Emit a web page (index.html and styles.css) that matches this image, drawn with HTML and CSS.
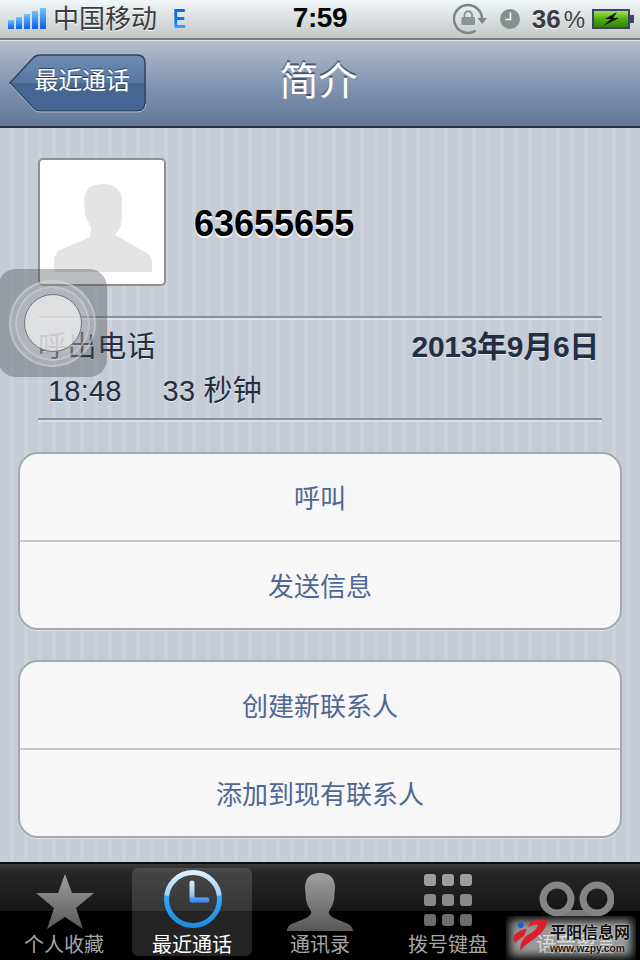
FILE: index.html
```html
<!DOCTYPE html>
<html lang="zh-CN">
<head>
<meta charset="utf-8">
<title>简介</title>
<link rel="stylesheet" href="styles.css">
</head>
<body>
<div class="phone">
  <header class="status">
    <div class="status-left">
      <svg class="signal" width="44" height="22" viewBox="0 0 44 22"><defs><linearGradient id="sg" x1="0" y1="0" x2="0" y2="1"><stop offset="0" stop-color="#6cc4ff"/><stop offset="1" stop-color="#0a5fe6"/></linearGradient></defs><rect x="0" y="12" width="6" height="9" fill="url(#sg)"/><rect x="8" y="9" width="6" height="12" fill="url(#sg)"/><rect x="16" y="6" width="6" height="15" fill="url(#sg)"/><rect x="24" y="3" width="6" height="18" fill="url(#sg)"/><rect x="32" y="0" width="6" height="21" fill="url(#sg)"/></svg>
      <span class="carrier">中国移动</span>
      <span class="edge">E</span>
    </div>
    <div class="clock">7:59</div>
    <div class="status-right">
      <svg class="rot" width="36" height="32" viewBox="0 0 36 32"><path d="M22.500 27.800A14 14 0 1 1 29 16" fill="none" stroke="#7a8584" stroke-width="2.500"/><path d="M24.500 15H34L29.200 21z" fill="#7a8584"/><rect x="8.500" y="14" width="13.500" height="8" rx="1" fill="#8a9493"/><path d="M11.500 14v-2a3.700 3.700 0 0 1 7.500 0v2" fill="none" stroke="#8a9493" stroke-width="2"/></svg>
      <svg class="alarm" width="20" height="20" viewBox="0 0 20 20"><circle cx="10" cy="10" r="10" fill="#858f8e"/><path d="M10.500 3.500v7h-5" fill="none" stroke="#fff" stroke-width="1.600"/></svg>
      <span class="pct">36<span class="pct-sign">%</span></span>
      <svg class="batt" width="42" height="20" viewBox="0 0 42 20"><defs><linearGradient id="bg" x1="0" y1="0" x2="0" y2="1"><stop offset="0" stop-color="#a8e85a"/><stop offset=".5" stop-color="#4fae14"/><stop offset="1" stop-color="#2e7f08"/></linearGradient></defs><rect x="1" y="1" width="36" height="18" fill="url(#bg)" stroke="#3c4664" stroke-width="2"/><rect x="38" y="6" width="4" height="8" fill="#3c4664"/><path d="M25 3 13 10H19L11 17 27 9H21Z" fill="#0a0d05"/></svg>
    </div>
  </header>

  <nav class="navbar">
    <a class="back"><svg class="back-shape" width="138" height="60" viewBox="0 0 138 60"><defs><linearGradient id="bk" x1="0" y1="0" x2="0" y2="1"><stop offset="0" stop-color="#6e8cb4"/><stop offset=".5" stop-color="#5676a2"/><stop offset=".51" stop-color="#45668f"/><stop offset="1" stop-color="#456797"/></linearGradient></defs><path d="M1 30 24 5Q27 2 31 2H128Q136 2 136 10V50Q136 58 128 58H31Q27 58 24 55Z" fill="url(#bk)" stroke="#2f435f" stroke-width="1.500"/><path d="M1 31 24 56Q27 59 31 59H128Q136 59 137 51" fill="none" stroke="#aebdd1" stroke-width="1"/></svg><span class="back-label">最近通话</span></a>
    <h1 class="title">简介</h1>
  </nav>

  <main class="content">
    <section class="person">
      <div class="avatar">
        <svg width="98" height="88" viewBox="0 0 98 88"><path d="M49 0C60 0 68 6 68 16L68 30C68 40 66 46 62 49L61 51 93 69Q97 72 98 77V88H0V74L4 67 36 53 37 44 31 31 30 13 34 4C40 1 45 0 49 0Z" fill="#e4e4e4"/></svg>
      </div>
      <div class="number">63655655</div>
    </section>

    <section class="call">
      <div class="call-top"><span class="call-type">呼出电话</span><span class="call-date">2013年9月6日</span></div>
      <div class="call-meta"><span>18:48</span><span>33 秒钟</span></div>
    </section>

    <section class="group">
      <a class="row">呼叫</a>
      <a class="row">发送信息</a>
    </section>
    <section class="group">
      <a class="row">创建新联系人</a>
      <a class="row">添加到现有联系人</a>
    </section>
  </main>

  <footer class="tabbar">
    <a class="tab">
      <svg class="tab-icon" width="60" height="62" viewBox="0 0 60 62"><defs><linearGradient id="tg" x1="0" y1="0" x2="0" y2="1"><stop offset="0" stop-color="#a0a0a0"/><stop offset="1" stop-color="#585858"/></linearGradient></defs><path d="M31 4 38 23H60L42 38 49 59 31 47 13 59 20 38 2 23H24Z" fill="url(#tg)"/></svg>
      <span>个人收藏</span>
    </a>
    <a class="tab tab-active">
      <svg class="tab-icon" width="60" height="62" viewBox="0 0 60 62"><defs><linearGradient id="ck" x1="0" y1="0" x2="0" y2="1"><stop offset="0" stop-color="#dcefff"/><stop offset=".43" stop-color="#9fd0f5"/><stop offset=".44" stop-color="#35aaf2"/><stop offset="1" stop-color="#1a8fe0"/></linearGradient><linearGradient id="hd" x1="0" y1="0" x2="0" y2="1"><stop offset="0" stop-color="#cfe8fd"/><stop offset=".75" stop-color="#8cc4f6"/><stop offset="1" stop-color="#3f8ff0"/></linearGradient></defs><circle cx="31" cy="29" r="26.500" fill="none" stroke="url(#ck)" stroke-width="5"/><path d="M30 13V30H45" fill="none" stroke="url(#hd)" stroke-width="5" stroke-linecap="round" stroke-linejoin="round"/></svg>
      <span>最近通话</span>
    </a>
    <a class="tab">
      <svg class="tab-icon" width="68" height="62" viewBox="0 0 68 62"><path d="M34 3C44 3 49 8 49 18L48 30C47 35 45 38 43 41 42 45 46 47 50 49L60 53C65 55 67 58 67 61H1C1 57 4 54 8 53L18 49C22 47 26 45 25 41 23 38 21 35 20 30L19 18C19 8 24 3 34 3Z" fill="url(#tg)"/></svg>
      <span>通讯录</span>
    </a>
    <a class="tab">
      <svg class="tab-icon" width="60" height="62" viewBox="0 0 60 62"><g class="key-top"><rect x="6" y="4" width="12" height="12" rx="3"/><rect x="24" y="4" width="12" height="12" rx="3"/><rect x="42" y="4" width="12" height="12" rx="3"/></g><g class="key-mid"><rect x="6" y="24" width="12" height="12" rx="3"/><rect x="24" y="24" width="12" height="12" rx="3"/><rect x="42" y="24" width="12" height="12" rx="3"/></g><g class="key-low"><rect x="6" y="44" width="12" height="12" rx="3"/><rect x="24" y="44" width="12" height="12" rx="3"/><rect x="42" y="44" width="12" height="12" rx="3"/></g></svg>
      <span>拨号键盘</span>
    </a>
    <a class="tab">
      <svg class="tab-icon" width="76" height="62" viewBox="0 0 76 62"><path d="M19 43H59" stroke="#7a7a7a" stroke-width="6"/><circle cx="19" cy="29" r="14" fill="none" stroke="#858585" stroke-width="7"/><circle cx="59" cy="29" r="14" fill="none" stroke="#858585" stroke-width="7"/></svg>
      <span>语音留言</span>
    </a>
  </footer>

  <div class="assistive">
    <div class="assistive-ring"><div class="assistive-core"></div></div>
  </div>

  <div class="watermark">
    <svg width="40" height="36" viewBox="0 0 40 36"><path d="M20 4C26 1 32 1 37 2 37 10 31 16 24 21 18 25 13 29 10 33 10 26 12 22 16 18 22 15 27 11 28 7 25 6 22 7 18 9Z" fill="#d8202a"/><path d="M3 20C5 15 11 11 17 11L14 18C11 20 8 22 5 25Z" fill="#d8202a"/><circle cx="10.700" cy="7" r="3" fill="#1a62c4"/></svg>
    <div class="wm-text"><span class="wm-cn">平阳信息网</span><span class="wm-en">www.wzpy.com</span></div>
  </div>
</div>
</body>
</html>
```
FILE: styles.css
```css
* { box-sizing: border-box; }
html, body { margin: 0; padding: 0; }
body { width: 640px; height: 960px; overflow: hidden; font-family: "Liberation Sans", "Noto Sans CJK SC", sans-serif; }
.phone { position: relative; width: 640px; height: 960px; display: flex; flex-direction: column; overflow: hidden; background: #c5ccd6; }

.status { height: 40px; flex: none; display: flex; align-items: center; justify-content: space-between; background: linear-gradient(#f1f6f8, #c3c7c7); border-bottom: 2px solid #7e8080; position: relative; padding: 0 8px; }
.status-left { display: flex; align-items: center; width: 230px; }
.signal { margin-top: -1px; flex: none; }
.carrier { font-size: 26px; line-height: 30px; color: #3a3d3e; margin-left: 1px; text-shadow: 0 1px 0 #fff; margin-top: -1px; }
.edge { display: inline-block; font-size: 27px; line-height: 24px; font-weight: 700; margin-left: 16px; width: 18px; transform: scaleX(.72); transform-origin: 0 50%; background: linear-gradient(#0a66e0, #0c7af0 60%, #55c0ff); -webkit-background-clip: text; background-clip: text; color: transparent; }
.clock { position: absolute; left: 0; right: 0; text-align: center; font-size: 28px; font-weight: 700; letter-spacing: -0.4px; color: #060606; margin-top: -2px; }
.status-right { display: flex; align-items: center; margin-right: -2px; }
.rot { margin-right: 11px; flex: none; }
.alarm { margin-right: 12px; flex: none; }
.pct { font-size: 26px; font-weight: 700; color: #3a3c3e; margin-right: 7px; text-shadow: 0 1px 0 #fff; white-space: nowrap; }
.pct-sign { font-weight: 400; font-size: 24px; margin-left: 3px; }
.batt { flex: none; }

.navbar { height: 88px; flex: none; position: relative; background: linear-gradient(#b5c0ce 0%, #98a7bd 28%, #7b8fac 60%, #64799a 100%); border-top: 1px solid #e3e7ec; border-bottom: 2px solid #2b3240; display: flex; align-items: center; justify-content: center; }
.back { position: absolute; left: 9px; top: 12px; width: 138px; height: 60px; }
.back-shape { display: block; }
.back-label { position: absolute; left: 25px; top: 13px; width: 96px; font-size: 24px; line-height: 30px; letter-spacing: -0.3px; text-align: center; color: #fff; text-shadow: 0 -1px 0 #2c3d58; white-space: nowrap; }
.title { margin: -3px 3px 0 0; font-size: 39px; line-height: 48px; font-weight: 400; color: #fff; text-shadow: 0 -2px 0 #46566f; }

.content { flex: 1; min-height: 0; padding: 30px 18px 0; background: repeating-linear-gradient(90deg, #c5ccd6 0 10px, #cbd2db 10px 14px); }
.person { display: flex; align-items: center; padding-left: 20px; gap: 28px; }
.avatar { width: 128px; height: 128px; background: #fff; border: 2px solid #8f8f8f; border-radius: 5px; display: flex; align-items: flex-end; justify-content: center; padding: 0 0 12px 2px; flex: none; }
.avatar svg { display: block; }
.number { font-size: 36px; font-weight: 700; color: #000; text-shadow: 0 2px 0 #fff; margin-top: 3px; }

.call { margin: 30px 20px 0; height: 104px; border-top: 2px solid #8d9095; border-bottom: 2px solid #8d9095; box-shadow: 0 2px 0 #dde2e8, inset 0 2px 0 #dde2e8; color: #252d42; text-shadow: 0 1px 0 #e8ecf0; }
.call-top { display: flex; justify-content: space-between; align-items: center; padding-right: 3px; padding-top: 11px; }
.call-type { font-size: 29px; line-height: 36px; letter-spacing: .6px; }
.call-date { font-size: 30px; line-height: 36px; font-weight: 700; letter-spacing: -0.3px; }
.call-meta { display: flex; gap: 41px; padding-left: 10px; padding-top: 8px; font-size: 29px; line-height: 36px; letter-spacing: .2px; }

.group { margin-top: 30px; border: 2px solid #a4a8ae; border-radius: 20px; background: #f7f7f7; box-shadow: 0 1px 0 #dfe3e8; overflow: hidden; }
.row { display: flex; align-items: center; justify-content: center; height: 86px; padding-bottom: 2px; font-size: 26px; color: #4f6793; }
.row + .row { border-top: 2px solid #c8c8c8; height: 88px; }
.call + .group { margin-top: 32px; }

.tabbar { height: 98px; flex: none; display: grid; grid-template-columns: repeat(5, 128px); padding: 4px 0; border-top: 2px solid #0d0d0d; background: linear-gradient(#3b3b3b 0, #272727 8%, #151515 49%, #000 49%, #000 100%); }
.tab { display: flex; flex-direction: column; align-items: center; justify-content: flex-end; color: #a5a5a5; font-size: 20px; line-height: 22px; border-radius: 6px; }
.tab-icon { display: block; flex: none; margin-bottom: 2px; }
.tab-active { background: rgba(255,255,255,.14); color: #fff; margin: 0 4px; }
.key-top { fill: #9e9e9e; }
.key-mid { fill: #8a8a8a; }
.key-low { fill: #6c6c6c; }

.assistive { position: absolute; left: -2px; top: 269px; width: 109px; height: 108px; border-radius: 18px; background: rgba(70,74,80,.37); display: flex; align-items: center; justify-content: center; }
.assistive-ring { width: 87px; height: 87px; border-radius: 50%; border: 2px solid rgba(215,218,222,.5); display: flex; align-items: center; justify-content: center; background: radial-gradient(circle, rgba(255,255,255,.25) 0 35px, rgba(225,228,232,.55) 35.500px 37px, rgba(255,255,255,.16) 37.500px); }
.assistive-core { width: 58px; height: 58px; border-radius: 50%; background: rgba(240,240,240,.72); border: 1.500px solid #70757a; }

.watermark { position: absolute; left: 506px; top: 916px; width: 130px; height: 44px; display: flex; align-items: flex-start; padding: 2px 4px 0; background: rgba(255,255,255,.6); box-shadow: inset 0 0 10px 4px #000; }
.watermark svg { flex: none; }
.wm-text { display: flex; flex-direction: column; margin: 6px 0 0 0; color: #111; text-shadow: 0 0 2px #fff; }
.wm-cn { font-size: 16px; font-weight: 700; line-height: 18px; white-space: nowrap; }
.wm-en { font-size: 10.300px; font-weight: 700; line-height: 13px; white-space: nowrap; }
```
